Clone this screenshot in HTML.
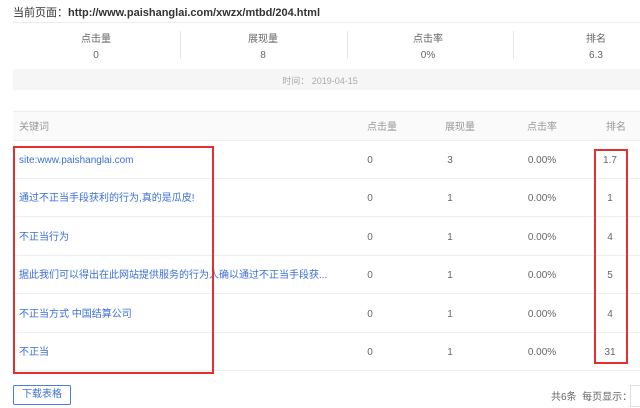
<html><head><style>
body{margin:0;width:640px;height:408px;background:#fff;font-family:"Liberation Sans","Noto Sans CJK SC",sans-serif;font-size:10px;color:#666;position:relative;overflow:hidden}
.a{position:absolute;white-space:nowrap;line-height:14px}
.c{transform:translateX(-50%)}
.l{color:#3c6fd8}
</style></head><body>
<div class="a" style="left:13px;top:6px;font-size:11px;color:#333">当前页面：<b style="color:#333">http://www.paishanglai.com/xwzx/mtbd/204.html</b></div>
<div class="a" style="left:13px;top:22px;width:627px;height:1px;background:#eee"></div>
<div class="a" style="left:180px;top:31px;width:1px;height:28px;background:#e8e8e8"></div>
<div class="a" style="left:347px;top:31px;width:1px;height:28px;background:#e8e8e8"></div>
<div class="a" style="left:513px;top:31px;width:1px;height:28px;background:#e8e8e8"></div>
<div class="a c" style="left:96px;top:33px">点击量</div><div class="a c" style="left:96px;top:49px">0</div>
<div class="a c" style="left:263px;top:33px">展现量</div><div class="a c" style="left:263px;top:49px">8</div>
<div class="a c" style="left:428px;top:33px">点击率</div><div class="a c" style="left:428px;top:49px">0%</div>
<div class="a c" style="left:596px;top:33px">排名</div><div class="a c" style="left:596px;top:49px">6.3</div>
<div class="a" style="left:13px;top:69px;width:627px;height:21px;background:#f6f6f6"></div>
<div class="a c" style="left:320px;top:74px;font-size:9px;color:#aaa">时间： 2019-04-15</div>
<div class="a" style="left:13px;top:111px;width:627px;height:28px;background:#fafafa;border-top:1px solid #eee;border-bottom:1px solid #eee"></div>
<div class="a" style="left:19px;top:121px;color:#999">关键词</div>
<div class="a c" style="left:382px;top:121px;color:#999">点击量</div>
<div class="a c" style="left:460px;top:121px;color:#999">展现量</div>
<div class="a c" style="left:542px;top:121px;color:#999">点击率</div>
<div class="a c" style="left:616px;top:121px;color:#999">排名</div>
<div id="rows"></div>
<script>
var d=[["site:www.paishanglai.com","3","1.7"],["通过不正当手段获利的行为,真的是瓜皮!","1","1"],["不正当行为","1","4"],["据此我们可以得出在此网站提供服务的行为人确以通过不正当手段获...","1","5"],["不正当方式 中国结算公司","1","4"],["不正当","1","31"]];
var h="";d.forEach(function(r,i){var y=140+i*38.4;var t=y+14;
h+='<div class="a" style="left:13px;top:'+(y+38)+'px;width:627px;height:1px;background:#eee"></div>';
h+='<div class="a l" style="left:19px;top:'+t+'px">'+r[0]+'</div>';
h+='<div class="a c" style="left:370px;top:'+t+'px">0</div>';
h+='<div class="a c" style="left:450px;top:'+t+'px">'+r[1]+'</div>';
h+='<div class="a c" style="left:542px;top:'+t+'px">0.00%</div>';
h+='<div class="a c" style="left:610px;top:'+t+'px">'+r[2]+'</div>';});
document.getElementById("rows").innerHTML=h;
</script>
<div class="a" style="left:13px;top:146px;width:197px;height:224px;border:2px solid #e03030"></div>
<div class="a" style="left:594px;top:149px;width:30px;height:211px;border:2px solid #e03030"></div>
<div class="a" style="left:13px;top:385px;width:56px;height:18px;border:1px solid #4a7fd8;border-radius:2px;color:#3c6fd8;text-align:center;line-height:18px">下载表格</div>
<div class="a" style="left:551px;top:391px">共6条&nbsp; 每页显示：</div>
<div class="a" style="left:630px;top:385px;width:12px;height:20px;border:1px solid #ddd"></div>
</body></html>
